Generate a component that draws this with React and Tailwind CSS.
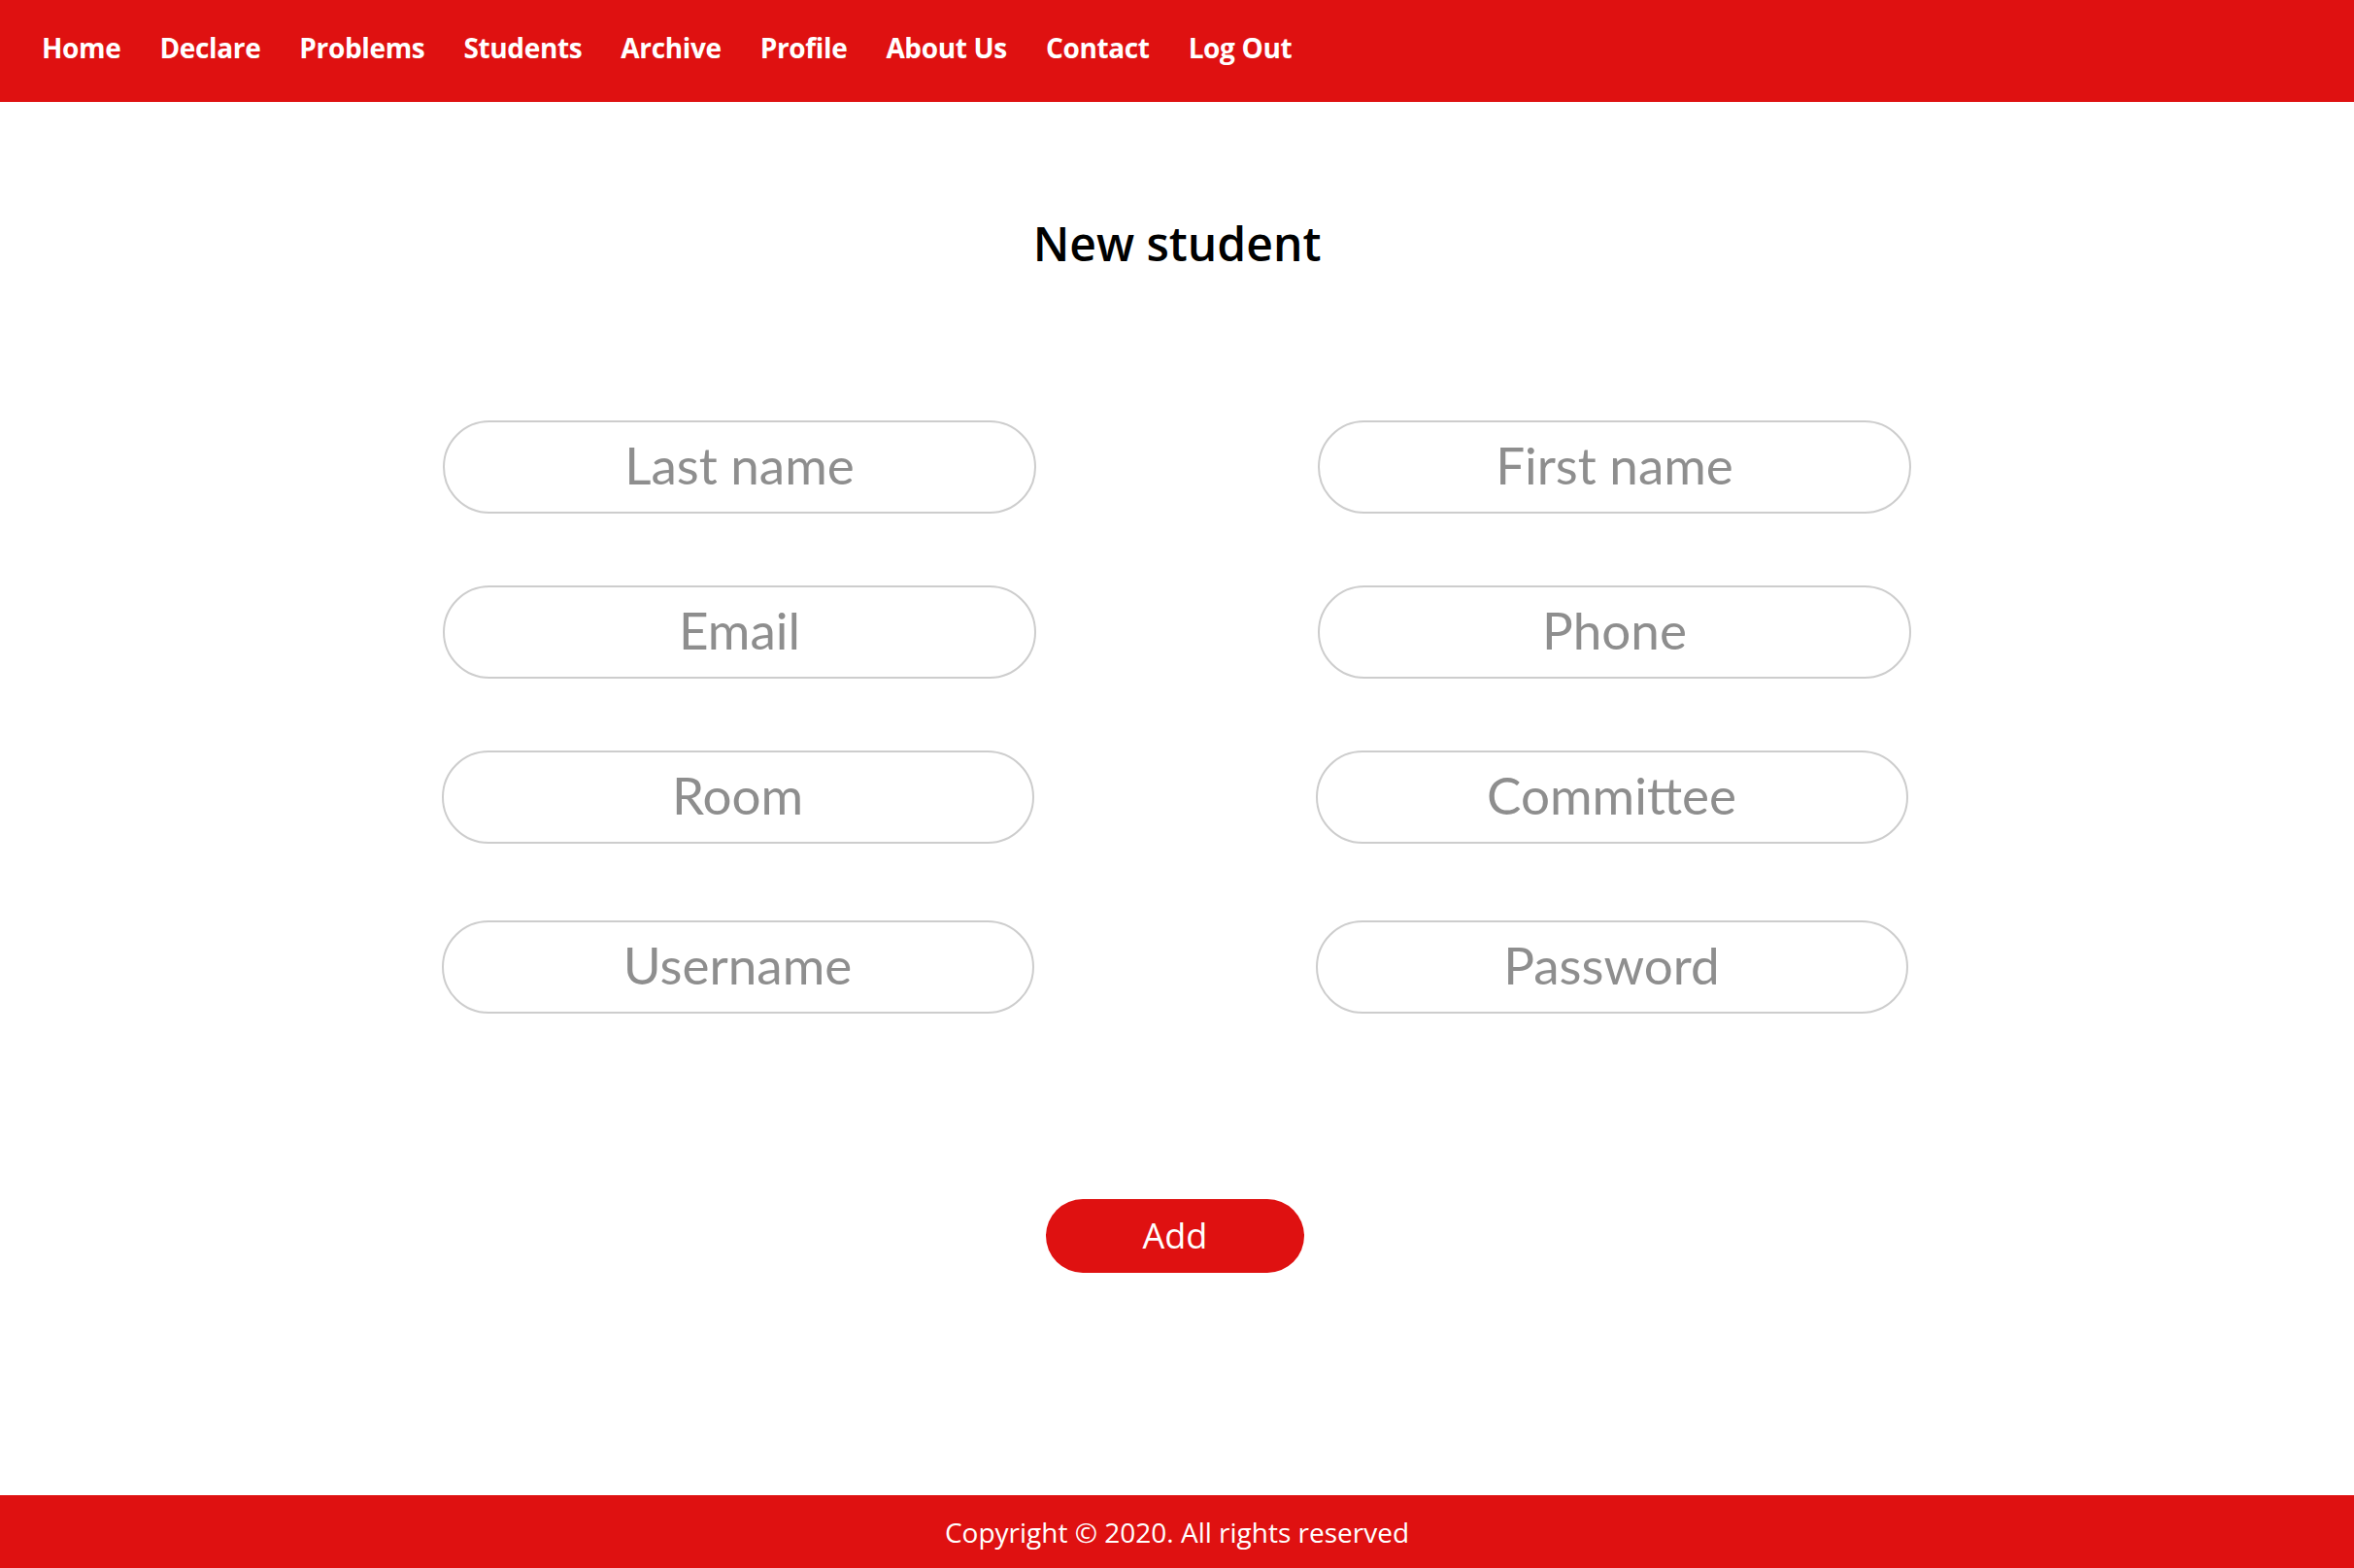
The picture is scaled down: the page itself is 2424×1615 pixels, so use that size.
import React from "react";

const navItems = ["Home", "Declare", "Problems", "Students", "Archive", "Profile", "About Us", "Contact", "Log Out"];

function Field({ placeholder, type = "text" }) {
  return (
    <input
      type={type}
      placeholder={placeholder}
      className="h-[96px] w-full rounded-full border-2 border-[#cdcdcd] bg-white pb-[6px] text-center text-[53px] text-[#555] outline-none placeholder:text-[#8e8e8e] [font-family:Lato,'Liberation_Sans',sans-serif]"
    />
  );
}

export default function App() {
  return (
    <div className="flex min-h-screen flex-col bg-white [font-family:'Open_Sans','Liberation_Sans',sans-serif]">
      <nav className="flex h-[105px] items-center gap-[40px] bg-[#df1111] pb-[8px] pl-[43px]">
        {navItems.map((item) => (
          <a key={item} href="#" className="text-[28px] font-bold tracking-[-0.35px] text-white">
            {item}
          </a>
        ))}
      </nav>

      <main className="flex flex-col items-center">
        <h1 className="mt-[122px] text-[48px] font-semibold leading-[48px] text-black">New student</h1>

        <div className="mt-[158px] flex flex-col items-center">
          <div className="grid w-[1512px] grid-cols-2 gap-x-[290px] gap-y-[74px]">
            <Field placeholder="Last name" />
            <Field placeholder="First name" />
            <Field placeholder="Email" type="email" />
            <Field placeholder="Phone" />
          </div>
          <div className="mr-[5px] mt-[74px] grid w-[1510px] grid-cols-2 gap-x-[290px] gap-y-[79px]">
            <Field placeholder="Room" />
            <Field placeholder="Committee" />
            <Field placeholder="Username" />
            <Field placeholder="Password" type="password" />
          </div>
        </div>

        <button className="mt-[191px] mr-[4px] h-[76px] w-[266px] rounded-full bg-[#df1111] text-[36px] text-white">
          Add
        </button>
      </main>

      <footer className="mt-auto flex h-[75px] items-center justify-center bg-[#df1111] text-[28px] text-white">
        Copyright © 2020. All rights reserved
      </footer>
    </div>
  );
}
